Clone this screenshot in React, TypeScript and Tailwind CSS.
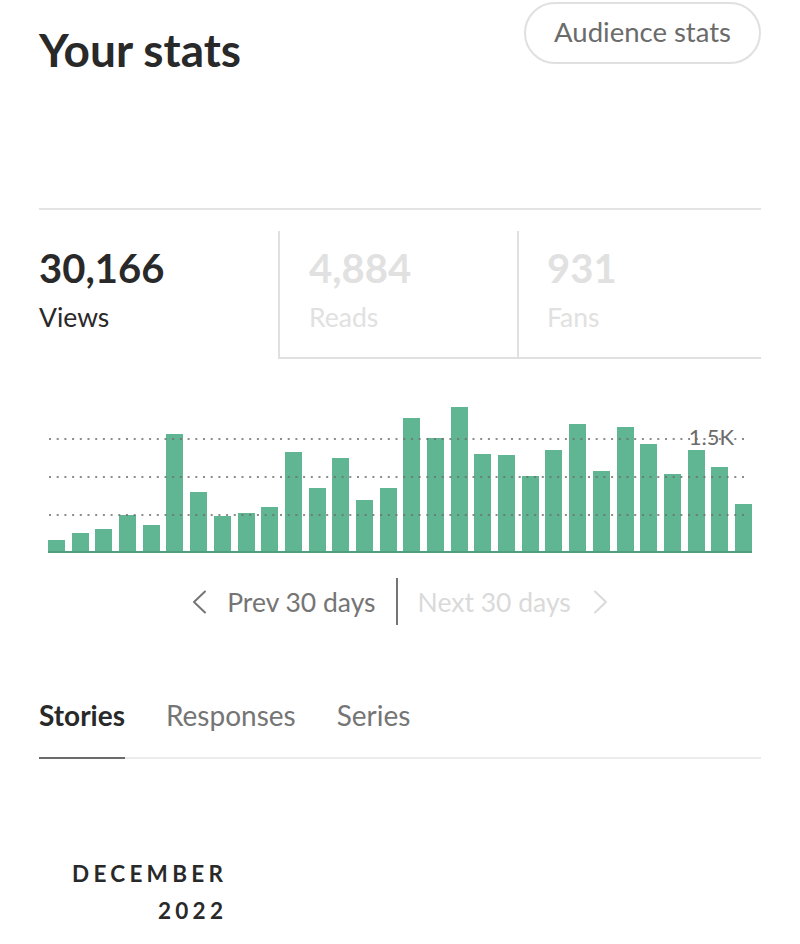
const BARS = [
  11, 18, 22, 36, 26, 117, 59, 35, 38, 44, 99, 63, 93, 51, 63, 133, 113, 144, 97, 96, 75, 101, 127, 80, 124, 107,
  77, 101, 84, 47,
]

const GRID = [114, 76, 38]

function Stat({ value, label, active, className }: { value: string; label: string; active?: boolean; className?: string }) {
  return (
    <div className={`pt-[14px] ${className ?? ""}`}>
      <div className={`text-[40px] leading-[46px] font-bold ${active ? "text-[#292929]" : "text-[#e1e1e1]"}`}>{value}</div>
      <div className={`text-[26.5px] leading-[32px] mt-[10px] ${active ? "text-[#292929]" : "text-[#e1e1e1]"}`}>{label}</div>
    </div>
  )
}

function Chevron({ dir }: { dir: "left" | "right" }) {
  return (
    <svg width="15" height="24" viewBox="0 0 15 24" fill="none" stroke="currentColor" strokeWidth="2" strokeLinecap="round" strokeLinejoin="round">
      {dir === "left" ? <polyline points="13,1.5 2,12 13,22.5" /> : <polyline points="2,1.5 13,12 2,22.5" />}
    </svg>
  )
}

export default function App() {
  return (
    <div className="w-[800px] h-[944px] bg-white px-[39px] overflow-hidden" style={{ fontFamily: "Lato, 'Noto Sans', sans-serif" }}>
      <div className="flex justify-between items-start pt-[2px]">
        <h1 className="text-[46px] leading-[50px] font-bold text-[#292929] mt-[23px]">Your stats</h1>
        <button className="h-[62px] w-[237px] rounded-full border-2 border-[#e0e0e0] text-[27.5px] text-[#6b6b6b] pb-[2px]">
          Audience stats
        </button>
      </div>

      <div className="mt-[133px] border-t-2 border-[#e3e3e3]" />

      <div className="flex mt-[21px] h-[128px]">
        <Stat value="30,166" label="Views" active className="w-[239px]" />
        <Stat value="4,884" label="Reads" className="w-[239px] border-l-2 border-b-2 border-[#e0e0e0] pl-[29px]" />
        <Stat value="931" label="Fans" className="flex-1 border-l-2 border-b-2 border-[#e0e0e0] pl-[28px]" />
      </div>

      <div className="relative ml-[9px] w-[704px] h-[158px] mt-[36px]">
        <div className="absolute inset-x-0 bottom-0 h-[144px] flex items-end justify-between border-b-2 border-[#4f9f7f]">
          {BARS.map((h, i) => (
            <div key={i} className="w-[17px] bg-[#60b592]" style={{ height: h }} />
          ))}
        </div>
        <svg className="absolute inset-0" width="704" height="158">
          {GRID.map(y => (
            <line key={y} x1="1" x2="700" y1={158 - y} y2={158 - y} stroke="#6f6f6f" strokeOpacity="0.8" strokeWidth="2" strokeDasharray="2 5.7" />
          ))}
        </svg>
        <span className="absolute right-[18px] top-[30px] text-[22px] leading-[24px] text-[#6b6b6b]">1.5K</span>
      </div>

      <div className="flex items-center justify-center mt-[25px] text-[26.5px] leading-[32px]">
        <div className="flex items-center text-[#757575]">
          <Chevron dir="left" />
          <span className="ml-[20px]">Prev 30 days</span>
        </div>
        <div className="w-[2px] h-[47px] bg-[#757575] mx-[20px]" />
        <div className="flex items-center text-[#dadada]">
          <span className="mr-[22px]">Next 30 days</span>
          <Chevron dir="right" />
        </div>
      </div>

      <div className="mt-[74px] flex gap-[41px] border-b-2 border-[#ececec] text-[28px] leading-[33px]">
        <div className="font-bold text-[#292929] pb-[25px] -mb-[2px] border-b-2 border-[#6b6b6b]">Stories</div>
        <div className="text-[#757575]">Responses</div>
        <div className="text-[#757575]">Series</div>
      </div>

      <div className="mt-[96px] ml-[33px] inline-flex flex-col items-end font-bold text-[22.5px] leading-[37px] tracking-[0.19em] text-[#292929]">
        <span className="-mr-[0.19em]">DECEMBER</span>
        <span className="-mr-[0.19em]">2022</span>
      </div>
    </div>
  )
}
